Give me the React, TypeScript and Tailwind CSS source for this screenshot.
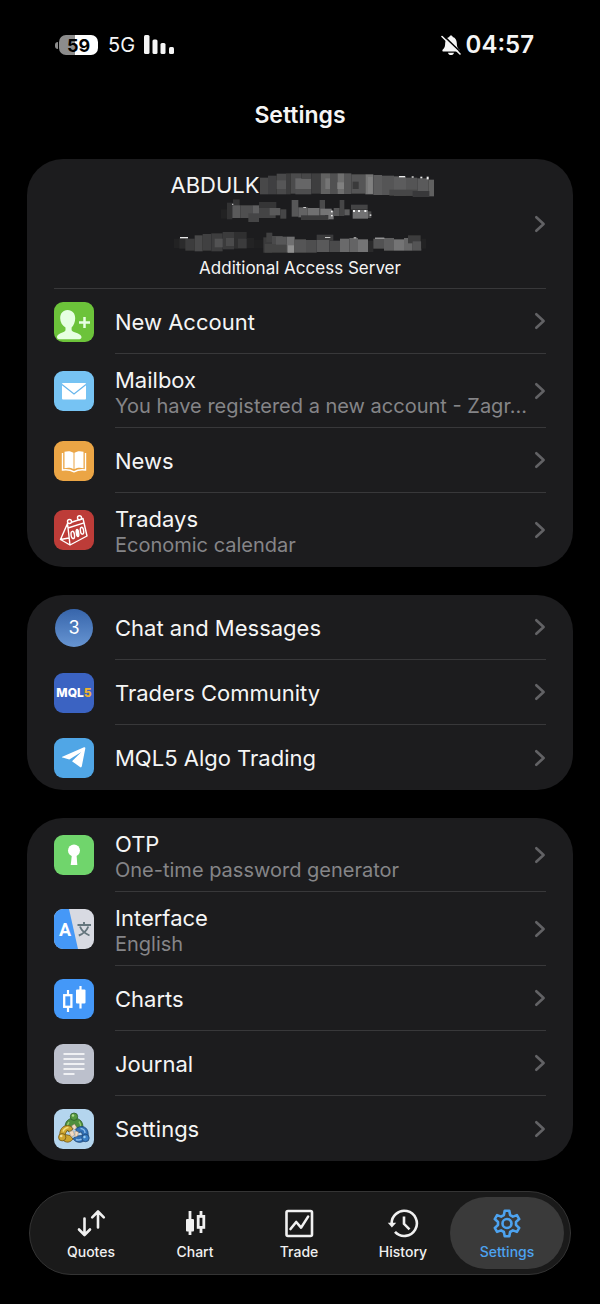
import type { ReactNode } from "react";

type RowProps = {
  icon: ReactNode;
  title: string;
  subtitle?: string;
  last?: boolean;
};

// [x, y, width, height, colour]
type Cell = [number, number, number, number, string];

const NAME_CELLS: Cell[] = [
  [327, 82, 24, 50, "#484849"],
  [351, 76, 26, 56, "#3f3f41"],
  [377, 70, 28, 62, "#49494a"],
  [377, 90, 28, 26, "#565657"],
  [405, 69, 14, 63, "#3c3c3d"],
  [419, 69, 32, 61, "#4b4b4c"],
  [433, 84, 48, 32, "#666667"],
  [451, 69, 30, 16, "#474748"],
  [433, 116, 48, 16, "#4e4e4f"],
  [481, 69, 28, 61, "#3e3e3f"],
  [509, 69, 28, 62, "#616161"],
  [523, 84, 14, 32, "#757575"],
  [537, 69, 22, 62, "#505051"],
  [559, 69, 20, 62, "#6f6f6f"],
  [559, 96, 20, 20, "#808080"],
  [579, 69, 22, 62, "#565657"],
  [601, 72, 42, 58, "#555556"],
  [605, 94, 18, 22, "#3a3a3b"],
  [643, 72, 24, 60, "#767676"],
  [651, 80, 14, 50, "#808080"],
  [667, 74, 26, 60, "#5c5c5d"],
  [693, 76, 36, 58, "#555556"],
  [729, 78, 36, 58, "#5c5c5d"],
  [765, 82, 34, 54, "#545455"],
  [799, 84, 34, 54, "#5a5a5b"],
  [833, 88, 16, 50, "#606060"],
  [715, 118, 84, 18, "#464647"],
  [785, 122, 50, 18, "#38383a"],
  [744, 77, 18, 4, "#e8e8e8"],
  [782, 78, 6, 4, "#e8e8e8"],
  [808, 79, 6, 5, "#e8e8e8"],
  [827, 79, 6, 8, "#f2f2f2"],
];

const BROKER_CELLS: Cell[] = [
  [213, 178, 20, 28, "#222223"],
  [231, 158, 16, 50, "#323233"],
  [249, 148, 20, 24, "#343435"],
  [247, 166, 24, 38, "#5a5a5b"],
  [271, 166, 36, 38, "#4f4f50"],
  [307, 166, 20, 50, "#606061"],
  [295, 190, 32, 26, "#454546"],
  [327, 156, 52, 18, "#353536"],
  [327, 174, 50, 30, "#444445"],
  [359, 174, 32, 22, "#5a5a5b"],
  [391, 178, 18, 28, "#464647"],
  [425, 150, 20, 50, "#575758"],
  [445, 172, 28, 30, "#636364"],
  [473, 174, 36, 24, "#707071"],
  [509, 150, 16, 50, "#4a4a4b"],
  [511, 176, 34, 20, "#747475"],
  [453, 196, 84, 14, "#3b3b3c"],
  [535, 182, 16, 26, "#777778"],
  [551, 174, 18, 24, "#565657"],
  [569, 150, 14, 48, "#464647"],
  [583, 178, 16, 18, "#5c5c5d"],
  [603, 164, 50, 15, "#444445"],
  [608, 180, 46, 26, "#727273"],
  [654, 184, 10, 20, "#4c4c4d"],
  [543, 182, 5, 5, "#f0f0f0"],
  [543, 195, 5, 4, "#f0f0f0"],
  [609, 180, 6, 6, "#f0f0f0"],
  [624, 180, 6, 6, "#f0f0f0"],
  [643, 180, 6, 6, "#f0f0f0"],
  [659, 193, 5, 5, "#d0d0d0"],
  [460, 171, 8, 3, "#d0d0d0"],
  [246, 161, 4, 4, "#c0c0c0"],
];

const SERVER_CELLS: Cell[] = [
  [72, 264, 30, 28, "#222223"],
  [88, 262, 24, 32, "#2b2b2c"],
  [106, 264, 28, 36, "#3c3c3d"],
  [134, 254, 24, 48, "#49494a"],
  [158, 250, 26, 50, "#404041"],
  [184, 248, 34, 54, "#3d3d3e"],
  [194, 264, 30, 26, "#525253"],
  [218, 244, 34, 52, "#3b3b3c"],
  [228, 262, 32, 24, "#4b4b4c"],
  [252, 244, 38, 50, "#2f2f30"],
  [264, 264, 28, 28, "#3b3b3c"],
  [290, 262, 22, 30, "#232324"],
  [312, 268, 30, 24, "#1f1f20"],
  [340, 260, 26, 46, "#3a3a3b"],
  [349, 246, 18, 28, "#404041"],
  [366, 256, 32, 30, "#4a4a4b"],
  [344, 280, 66, 26, "#444444"],
  [378, 258, 32, 24, "#575758"],
  [410, 258, 24, 48, "#707071"],
  [414, 284, 18, 22, "#909090"],
  [434, 266, 34, 40, "#555556"],
  [468, 268, 32, 38, "#4e4e4f"],
  [500, 252, 50, 18, "#3b3b3c"],
  [500, 268, 38, 36, "#59595a"],
  [538, 270, 32, 34, "#4a4a4b"],
  [570, 264, 28, 40, "#6a6a6b"],
  [598, 262, 26, 42, "#646465"],
  [624, 266, 30, 38, "#747475"],
  [654, 270, 16, 34, "#2a2a2b"],
  [670, 264, 32, 30, "#525253"],
  [702, 262, 30, 38, "#5e5e5f"],
  [732, 266, 30, 34, "#747475"],
  [762, 262, 26, 38, "#666667"],
  [774, 254, 38, 24, "#3c3c3d"],
  [788, 272, 26, 28, "#545455"],
  [814, 264, 14, 30, "#222223"],
  [90, 259, 24, 4, "#e8e8e8"],
  [525, 259, 16, 3, "#c8c8c8"],
  [611, 260, 8, 3, "#d8d8d8"],
  [675, 261, 28, 3, "#c8c8c8"],
];

const Mosaic = ({ cells, viewBox, className }: { cells: Cell[]; viewBox: string; className: string }) => (
  <svg viewBox={viewBox} className={className} aria-hidden="true">
    {cells.map(([x, y, w, h, fill], i) => (
      <rect key={i} x={x} y={y} width={w} height={h} fill={fill} />
    ))}
  </svg>
);

const Chevron = () => (
  <svg viewBox="0 0 12 18" className="h-[18px] w-3 shrink-0" fill="none" stroke="#626265" strokeWidth="2.600" strokeLinecap="round" strokeLinejoin="round">
    <path d="M2.300 2.200 9.600 9l-7.300 6.800" />
  </svg>
);

const Row = ({ icon, title, subtitle, last }: RowProps) => (
  <li>
    <button type="button" className="flex w-full gap-[21px] px-[27px] text-left">
      <span className="flex w-10 shrink-0 items-center justify-center self-stretch">{icon}</span>
      <span
        className={`flex min-w-0 flex-1 items-center justify-between ${subtitle ? "h-[74px]" : "h-[65px]"} ${
          last ? "" : "border-b border-[#38383a]"
        }`}
      >
        <span className={`min-w-0 ${subtitle ? "pt-1" : "pt-px"}`}>
          <span className="block text-[22px] leading-[26px] text-[#f5f5f5]">{title}</span>
          {subtitle && (
            <span className="block text-[20px] leading-[26px] whitespace-nowrap text-[#858588]">{subtitle}</span>
          )}
        </span>
        <Chevron />
      </span>
    </button>
  </li>
);

const Card = ({ children }: { children: ReactNode }) => (
  <ul className="overflow-hidden rounded-[36px] bg-[#1c1c1e]">{children}</ul>
);

/* row icons */
const NewAccountIcon = () => (
  <svg viewBox="0 0 40 40" className="size-10">
    <rect width="40" height="40" rx="9" fill="#6cc33a" />
    <path
      d="M13.5 8c5 0 7.700 3.600 7.700 8.300 0 4-1.500 7.200-3.600 9.200v2.200c0 1.100.9 1.700 2.300 2.200 4 1.400 7.600 2.600 7.600 5.200 0 1.500-.8 2.100-2 2.100H5c-1.300 0-2-.6-2-2.100 0-2.600 3.200-3.800 6.600-5.200 1.300-.5 1.900-1.100 1.900-2.200v-2.200c-3.200-1.800-5.300-5.200-5.300-9.200C6.200 11.600 8.800 8 13.500 8Z"
      fill="#e6ffe2"
    />
    <path d="M30.500 15v11M25 20.500h11" stroke="#e6ffe2" strokeWidth="2.500" />
  </svg>
);

const MailIcon = () => (
  <svg viewBox="0 0 40 40" className="size-10">
    <rect width="40" height="40" rx="9" fill="#76c3f3" />
    <rect x="8" y="12" width="24" height="16.500" rx="1" fill="#fff" />
    <path d="M8 13.500 20 23l12-9.500" fill="none" stroke="#66b5ec" strokeWidth="1.200" />
  </svg>
);

const NewsIcon = () => (
  <svg viewBox="0 0 40 40" className="size-10">
    <rect width="40" height="40" rx="9" fill="#eba545" />
    <path d="M10.500 10.800c3.500-1 6.500-.8 9 1v16.400c-2.500-1.600-5.500-1.900-9-1ZM29.500 10.800c-3.500-1-6.500-.8-9 1v16.400c2.500-1.600 5.500-1.900 9-1Z" fill="#fff" />
    <path d="M8.500 12v17c4-.6 7.800-.3 11.500 1.800 3.700-2.100 7.500-2.400 11.500-1.800V12" fill="none" stroke="#fff" strokeWidth="1.400" />
  </svg>
);

const TradaysIcon = () => (
  <svg viewBox="0 0 40 40" className="size-10" fill="none" stroke="#fff" strokeWidth="1.400" strokeLinejoin="round" strokeLinecap="round">
    <rect width="40" height="40" rx="9" fill="#bd3c38" stroke="none" />
    <path d="m13.500 13.500 15.500-5 4 17.500-17 9ZM13.500 13.500l-7 16 9.500 5.500M6.500 29.500l8.500-1.500M14 18l16-5.200M13.500 13.500l2.500 21.500" />
    <circle cx="15.500" cy="11.500" r="2" fill="#bd3c38" />
    <circle cx="25.500" cy="7.800" r="2" fill="#bd3c38" />
    <ellipse cx="18.800" cy="25" rx="1.700" ry="3.700" transform="rotate(-8 18.800 25)" />
    <ellipse cx="23.500" cy="23" rx="1.200" ry="3.700" transform="rotate(-8 23.500 23)" fill="#fff" />
    <ellipse cx="28" cy="20.700" rx="1.600" ry="3.500" transform="rotate(-8 28 20.700)" />
  </svg>
);

const ChatBadge = () => (
  <span className="flex size-[38px] items-center justify-center rounded-full bg-linear-to-b from-[#3765ab] to-[#6795d2] text-[18px] text-white">
    3
  </span>
);

const Mql5Icon = () => (
  <span className="flex size-10 items-center justify-center rounded-[9px] bg-[#3b63c2] text-[12px] font-extrabold text-white">
    MQL<span className="text-[#f0b32f]">5</span>
  </span>
);

const TelegramIcon = () => (
  <svg viewBox="0 0 40 40" className="size-10">
    <rect width="40" height="40" rx="9" fill="#50a6e6" />
    <path d="M8.300 18.700 30 9.300c.9-.4 1.500.1 1.300 1.100L27.800 28.300c-.2 1.100-.9 1.400-1.800.8l-8-5.900 9.300-9.200-12 7.500-6.800-1.900c-.8-.2-.8-.6-.2-.9Z" fill="#fff" />
  </svg>
);

const OtpIcon = () => (
  <svg viewBox="0 0 40 40" className="size-10">
    <rect width="40" height="40" rx="9" fill="#70d56c" />
    <circle cx="20" cy="15.500" r="6" fill="#fff" />
    <path d="M18 19h4.500l.8 11h-6.600Z" fill="#fff" />
  </svg>
);

const InterfaceIcon = () => (
  <svg viewBox="0 0 40 40" className="size-10">
    <rect width="40" height="40" rx="9" fill="#d8dae2" />
    <path d="M9 0h6l9 40H9a9 9 0 0 1-9-9V9a9 9 0 0 1 9-9Z" fill="#4598f7" />
    <text x="11" y="27" textAnchor="middle" fontSize="18" fontWeight="700" fill="#fff" fontFamily="Roboto, sans-serif">
      A
    </text>
    <path d="M23.500 16h13.500M30 13v3M26 17.500c1.500 4 5 7 9.500 9M34.300 17.500c-1.500 4-4.500 7-9.500 9" fill="none" stroke="#65767e" strokeWidth="1.900" />
  </svg>
);

const ChartsIcon = () => (
  <svg viewBox="0 0 40 40" className="size-10">
    <rect width="40" height="40" rx="9" fill="#4498f8" />
    <path d="M14 11v5M14 28v5M26.500 7v5M26.500 24v5.500" stroke="#fff" strokeWidth="2.200" />
    <rect x="10.200" y="16.200" width="7.200" height="11.600" fill="none" stroke="#fff" strokeWidth="2.300" />
    <rect x="22" y="10.500" width="9.500" height="14" rx="1" fill="#fff" />
  </svg>
);

const JournalIcon = () => (
  <svg viewBox="0 0 40 40" className="size-10">
    <rect width="40" height="40" rx="9" fill="#bcc0cc" />
    <path d="M9.500 10h21M9.500 15h21M9.500 20h21M9.500 25h21M9.500 30h11" stroke="#fff" strokeWidth="1.600" />
  </svg>
);

const AppLogo = () => (
  <svg viewBox="0 0 40 40" className="size-10" strokeWidth=".8">
    <rect width="40" height="40" rx="9" fill="#b4d5ee" />
    <path d="M11.500 20c-1.500-5 1.500-10 6-10.500h5c4.500.5 7.500 5.500 6 10.500l-3 2.500-3-5-2.500-2-2.500 2-3 5Z" fill="#4f8f3d" stroke="#2c5a27" />
    <path d="M15 13c-1.500 2-2 4-1 6M25 12.500c1.500 2 2 4 1.500 6" stroke="#93c46c" strokeWidth="1.400" fill="none" />
    <circle cx="20" cy="7.700" r="3.700" fill="#55983f" stroke="#2c5a27" />
    <circle cx="19" cy="6.500" r="1.200" fill="#b2da8d" />
    <path d="M6 27c-1-6 2.500-10.500 7.500-10.500 2.500 0 4.500 1.300 5.500 3.500l-3 2.500-3-1-2 4 5 1 3 3.500c-3.500 5-10 4-13-3Z" fill="#cda52f" stroke="#6d5518" />
    <path d="M9 22.500c1-2.500 3-4 5.500-4" stroke="#f3dd7c" strokeWidth="1.600" fill="none" />
    <circle cx="8.200" cy="28.200" r="3.700" fill="#cfa52f" stroke="#6d5518" />
    <circle cx="7.200" cy="27" r="1.300" fill="#f6e59b" />
    <path d="M34 27c1-5.500-2-9.500-6.500-9.500-2.500 0-5 1.500-6 3.500l3 2.500 3-.5 1 3.500-5.500.5-4 2.500c2.500 5 11 6 15-2.500Z" fill="#3272b7" stroke="#1b4274" />
    <path d="M31 24c0-2.500-2-4.500-4.500-4.500M22 30.500c2 .8 4 .5 6-.7" stroke="#8bbceb" strokeWidth="1.500" fill="none" />
    <circle cx="31.500" cy="29" r="3.700" fill="#397ec4" stroke="#1b4274" />
    <circle cx="30.500" cy="28" r="1.200" fill="#9fd0f3" />
    <path d="m17.500 17 3-2 2 3-2 3ZM15 23l4-1.500 1.500 4.500-3 2ZM21 22l3.500 1-1 4-2.500 1Z" fill="#f1dbc2" stroke="#967960" strokeWidth=".4" />
  </svg>
);

/* tab bar icons */
const QuotesTabIcon = () => (
  <svg viewBox="0 0 32 32" className="size-8" fill="none" stroke="currentColor" strokeWidth="2.600" strokeLinecap="round" strokeLinejoin="round">
    <path d="M9.500 11.500v16M4 22.500l5.500 5.500 5.500-5.500M23 20.500V5M17.200 10.300 23 4.500l5.800 5.800" />
  </svg>
);

const ChartTabIcon = () => (
  <svg viewBox="0 0 32 32" className="size-8" fill="none" stroke="currentColor" strokeWidth="2.800">
    <path d="M11 4v24M22 4v5M22 20v6" />
    <rect x="7" y="12" width="8" height="12.500" rx="1" fill="currentColor" stroke="none" />
    <rect x="19.200" y="9.400" width="5.600" height="11" />
  </svg>
);

const TradeTabIcon = () => (
  <svg viewBox="0 0 32 32" className="size-8" fill="none" stroke="currentColor" strokeWidth="2.600" strokeLinejoin="round">
    <rect x="3.500" y="4" width="25.500" height="25" rx="1.500" />
    <path d="m7.500 22 5.700-7 4.900 5.600 7-11" strokeLinecap="round" />
  </svg>
);

const HistoryTabIcon = () => (
  <svg viewBox="0 0 32 32" className="size-8" fill="none" stroke="currentColor" strokeWidth="2.600">
    <path d="M4.700 17.500a12.600 12.600 0 1 1 3.300 7.400" />
    <path d="M.8 15.800h8.400l-4.300 4.600Z" fill="currentColor" stroke="none" />
    <path d="M17 9.500v7.300l5.500 5.500" />
  </svg>
);

const SettingsTabIcon = () => (
  <svg viewBox="0 0 32 32" className="size-8" fill="none" stroke="currentColor" strokeWidth="2.600" strokeLinejoin="round">
    <path d="M13.700 3.800h4.600l.8 4.200 2.800 1.600 4-1.500 2.300 4-3.200 2.800v3.200l3.200 2.800-2.300 4-4-1.500-2.800 1.600-.8 4.200h-4.600l-.8-4.200-2.800-1.600-4 1.500-2.300-4L7 18.100v-3.200l-3.200-2.800 2.300-4 4 1.500L12.900 8Z" />
    <circle cx="16" cy="16.500" r="4.500" />
  </svg>
);

const TABS = [
  { label: "Quotes", Icon: QuotesTabIcon },
  { label: "Chart", Icon: ChartTabIcon },
  { label: "Trade", Icon: TradeTabIcon },
  { label: "History", Icon: HistoryTabIcon },
  { label: "Settings", Icon: SettingsTabIcon, active: true },
];

const StatusBar = () => (
  <div className="flex h-[90px] items-center justify-between pr-[66px] pl-[55px] text-[#f5f5f5]">
    <div className="flex items-center">
      <span className="mr-px h-[7px] w-[3px] rounded-l-full bg-[#8c8c8c]" />
      <span className="flex h-5 w-[39px] items-center justify-center rounded-[7px] bg-linear-to-r from-[#8c8c8c] from-41% to-white to-41% text-[18px] font-bold text-black">
        59
      </span>
      <span className="ml-[10px] text-[20px]">5G</span>
      <svg viewBox="0 0 30 20" className="ml-[9px] h-5 w-[30px]" fill="currentColor">
        <rect width="5.500" height="19" rx="1.500" />
        <rect x="8.500" y="4.500" width="5" height="14.500" rx="1.500" />
        <rect x="16.500" y="8" width="5" height="11" rx="1.500" />
        <rect x="25" y="12" width="5" height="7" rx="1.500" />
      </svg>
    </div>
    <div className="flex items-center gap-[5px]">
      <svg viewBox="0 0 20 22" className="h-[22px] w-5">
        <path
          d="M10 1.500c.9 0 1.600.6 1.700 1.400 2.700.8 4 3 4.100 6 .1 4 .8 5 2.400 6.600.9 1 .4 2.100-.9 2.100H2.700c-1.300 0-1.800-1.100-.9-2.100C3.400 13.900 4.100 12.900 4.200 8.900c.1-3 1.400-5.200 4.100-6 .1-.8.800-1.400 1.700-1.400ZM7 18.700h6c-.3 1.400-1.500 2.300-3 2.300s-2.700-.9-3-2.300Z"
          fill="currentColor"
        />
        <path d="M2 1.200 20 18.500" stroke="#000" strokeWidth="1.600" />
        <path d="M1 2.500 19 20" stroke="currentColor" strokeWidth="1.600" strokeLinecap="round" />
      </svg>
      <time className="text-[24px] font-semibold">04:57</time>
    </div>
  </div>
);

const AccountRow = () => (
  <li>
    <button type="button" className="relative block w-full px-[27px]">
      <span className="flex h-[130px] flex-col items-center border-b border-[#38383a] pt-3">
        <span className="flex h-7 items-center pl-1 text-[22px] text-[#f5f5f5]">
          ABDULK
          <Mosaic cells={NAME_CELLS} viewBox="327 62 522 84" className="h-7 w-[174px]" />
        </span>
        <Mosaic cells={BROKER_CELLS} viewBox="213 147 474 84" className="h-7 w-[158px]" />
        <Mosaic cells={SERVER_CELLS} viewBox="72 229 756 90" className="h-[30px] w-[252px]" />
        <span className="text-[17px] leading-[22px] text-[#f5f5f5]">Additional Access Server</span>
      </span>
      <span className="absolute inset-y-0 right-[27px] flex items-center">
        <Chevron />
      </span>
    </button>
  </li>
);

const App = () => {
  return (
    <div className="min-h-screen bg-black pb-[29px] font-['Inter','Noto_Sans',sans-serif] text-white">
      <StatusBar />
      <header className="flex h-[50px] items-center justify-center">
        <h1 className="text-[23px] font-semibold text-[#f5f5f5]">Settings</h1>
      </header>

      <main className="flex flex-col gap-7 px-[27px] pt-[19px]">
        <Card>
          <AccountRow />
          <Row icon={<NewAccountIcon />} title="New Account" />
          <Row icon={<MailIcon />} title="Mailbox" subtitle="You have registered a new account - Zagr..." />
          <Row icon={<NewsIcon />} title="News" />
          <Row icon={<TradaysIcon />} title="Tradays" subtitle="Economic calendar" last />
        </Card>
        <Card>
          <Row icon={<ChatBadge />} title="Chat and Messages" />
          <Row icon={<Mql5Icon />} title="Traders Community" />
          <Row icon={<TelegramIcon />} title="MQL5 Algo Trading" last />
        </Card>
        <Card>
          <Row icon={<OtpIcon />} title="OTP" subtitle="One-time password generator" />
          <Row icon={<InterfaceIcon />} title="Interface" subtitle="English" />
          <Row icon={<ChartsIcon />} title="Charts" />
          <Row icon={<JournalIcon />} title="Journal" />
          <Row icon={<AppLogo />} title="Settings" last />
        </Card>
      </main>

      {/* bottom tabs */}
      <nav className="mx-[29px] mt-[30px] grid h-[84px] grid-cols-5 rounded-full border border-[#343434] bg-[#1a1a1a] py-[5px] pr-[11px] pl-[9px]">
        {TABS.map(({ label, Icon, active }) => (
          <button
            key={label}
            type="button"
            aria-current={active ? "page" : undefined}
            className={`-mx-[5px] flex flex-col items-center rounded-full pt-[10px] ${
              active ? "bg-[#3a3a3a] text-[#4da3f0]" : "text-[#f0f0f0]"
            }`}
          >
            <Icon />
            <span className="mt-1 text-[14px] leading-[18px] font-medium">{label}</span>
          </button>
        ))}
      </nav>
    </div>
  );
};

export default App;
